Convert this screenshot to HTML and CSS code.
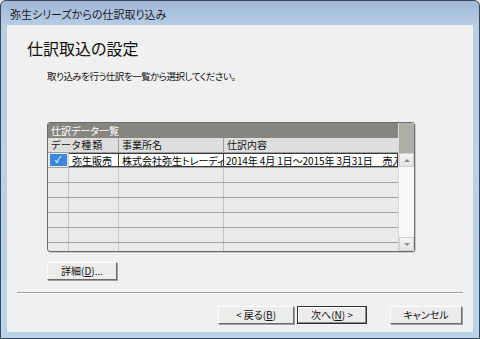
FILE: index.html
```html
<!DOCTYPE html>
<html lang="ja">
<head>
    <meta charset="UTF-8">
    <title>弥生シリーズからの仕訳取り込み</title>
    <link rel="stylesheet" href="styles.css">
</head>
<body>
    <div class="window">
        <div class="titlebar">弥生シリーズからの仕訳取り込み</div>
        <div class="client">
            <h1 class="heading">仕訳取込の設定</h1>
            <p class="lead">取り込みを行う仕訳を一覧から選択してください。</p>

            <div class="panel">
                <div class="list">
                    <div class="caption">仕訳データ一覧</div>
                    <div class="row head">
                        <div class="cell c-kind">データ種類</div>
                        <div class="cell c-office">事業所名</div>
                        <div class="cell c-detail">仕訳内容</div>
                    </div>
                    <div class="row data">
                        <div class="cell c-check"><span class="checkbox">&#10003;</span></div>
                        <div class="cell c-type">弥生販売</div>
                        <div class="cell c-office">株式会社弥生トレーディ</div>
                        <div class="cell c-detail">2014年 4月 1日～2015年 3月31日　売入</div>
                    </div>
                    <div class="row empty"><div class="cell c-check"></div><div class="cell c-type"></div><div class="cell c-office"></div><div class="cell c-detail"></div></div>
                    <div class="row empty"><div class="cell c-check"></div><div class="cell c-type"></div><div class="cell c-office"></div><div class="cell c-detail"></div></div>
                    <div class="row empty"><div class="cell c-check"></div><div class="cell c-type"></div><div class="cell c-office"></div><div class="cell c-detail"></div></div>
                    <div class="row empty"><div class="cell c-check"></div><div class="cell c-type"></div><div class="cell c-office"></div><div class="cell c-detail"></div></div>
                    <div class="row empty"><div class="cell c-check"></div><div class="cell c-type"></div><div class="cell c-office"></div><div class="cell c-detail"></div></div>
                    <div class="row empty"><div class="cell c-check"></div><div class="cell c-type"></div><div class="cell c-office"></div><div class="cell c-detail"></div></div>
                </div>
                <div class="scrollbar">
                    <div class="sb-top"></div>
                    <div class="sb-btn"><span class="arrow up"></span></div>
                    <div class="sb-track"></div>
                    <div class="sb-btn"><span class="arrow down"></span></div>
                </div>
            </div>

            <button class="btn btn-detail">詳細(<u>D</u>)...</button>

            <div class="separator"></div>

            <div class="actions">
                <button class="btn btn-back">&lt; 戻る(<u>B</u>)</button>
                <button class="btn btn-next">次へ(<u>N</u>) &gt;</button>
                <button class="btn btn-cancel">キャンセル</button>
            </div>
        </div>
    </div>
</body>
</html>
```

FILE: styles.css
```css
/* General */
html, body {
    margin: 0;
    padding: 0;
    background: #dfe7ef;
}

body {
    font-family: "Noto Sans CJK JP", "DejaVu Sans", sans-serif;
    font-size: 10px;
    color: #111;
    font-feature-settings: "palt";
}

/* Window frame */
.window {
    width: 480px;
    height: 339px;
    box-sizing: border-box;
    border: 1px solid #3b4858;
    border-radius: 6px 6px 0 0;
    background: linear-gradient(180deg, #9fb7d5 0, #b7cde6 24px, #bcd3ec 100%);
    padding: 0 6px 6px;
    display: flex;
    flex-direction: column;
}

.titlebar {
    height: 24px;
    line-height: 26px;
    padding-left: 3px;
    font-size: 11px;
    color: #1c1c1c;
}

.client {
    flex: 1;
    background: #f0f0f0;
    border-top: 1px solid #e4edf6;
    display: flex;
    flex-direction: column;
    align-items: flex-start;
}

/* Header texts */
.heading {
    margin: 12px 0 0 20px;
    font-size: 16px;
    line-height: 20px;
    font-weight: normal;
    color: #111;
}

.lead {
    margin: 11px 0 0 40px;
    font-size: 9.5px;
    letter-spacing: -0.5px;
    line-height: 14px;
}

/* List panel */
.panel {
    margin: 39px 0 0 40px;
    width: 368px;
    height: 130px;
    box-sizing: border-box;
    border: 1px solid #6d6d68;
    border-radius: 3px;
    display: flex;
    overflow: hidden;
    background: #eaeaea;
    box-shadow: 1px 1px 0 #c8c8c8;
}

.list {
    flex: 1;
    display: flex;
    flex-direction: column;
    overflow: hidden;
}

.caption {
    height: 15px;
    line-height: 15px;
    flex-shrink: 0;
    padding-left: 3px;
    background: #86857f;
    color: #fff;
}

.row {
    display: flex;
    height: 15px;
    flex-shrink: 0;
    box-sizing: border-box;
}

.cell {
    box-sizing: border-box;
    line-height: 14px;
    padding-left: 3px;
    white-space: nowrap;
    overflow: hidden;
    border-right: 1px solid #c4c4c4;
}

.c-check { width: 21px; padding: 0; }
.c-type { width: 50px; }
.c-kind { width: 71px; letter-spacing: 0.8px; }
.c-office { width: 105px; }
.c-detail { flex: 1; border-right: none; }

.row.head {
    background: #dedede;
    border-bottom: 1px solid #9d9d9d;
}

.row.head .cell {
    border-right-color: #9d9d9d;
}

.row.data {
    border-bottom: 1px solid #a4a4a4;
}

.row.data .cell {
    background: #fff;
    border: 1px solid #3a3a3a;
    border-left: none;
    color: #000;
}

.row.data .c-detail {
    padding-left: 2px;
    letter-spacing: -0.1px;
}

.row.data .c-check {
    background: #eaeaea;
    border: none;
    border-right: 1px solid #c4c4c4;
    display: flex;
    align-items: center;
    justify-content: center;
}

.checkbox {
    display: block;
    width: 17px;
    height: 12px;
    background: #3d86dc;
    color: #fff;
    font-size: 9px;
    line-height: 12px;
    text-align: center;
}

.row.empty {
    border-bottom: 1px solid #a4a4a4;
}

/* Scrollbar */
.scrollbar {
    width: 15px;
    display: flex;
    flex-direction: column;
    background: #f8f8f8;
    border-left: 1px solid #d8d8d8;
}

.sb-top {
    height: 30px;
    background: #aeada6;
}

.sb-btn {
    height: 14px;
    background: linear-gradient(#f4f4f4, #e4e4e4);
    border: 1px solid #d0d0d0;
    box-sizing: border-box;
    display: flex;
    align-items: center;
    justify-content: center;
}

.sb-track {
    flex: 1;
}

.arrow {
    width: 0;
    height: 0;
    border-left: 3px solid transparent;
    border-right: 3px solid transparent;
}

.arrow.up { border-bottom: 3px solid #8a8a8a; }
.arrow.down { border-top: 3px solid #8a8a8a; }

/* Buttons */
.btn {
    font-family: inherit;
    font-size: 10px;
    font-feature-settings: "palt";
    color: #111;
    height: 18px;
    padding: 0;
    line-height: 14px;
    background: #ececec;
    border: 1px solid;
    border-color: #fdfdfd #6b6b6b #6b6b6b #fdfdfd;
    box-shadow: 1px 1px 0 #a0a0a0;
    cursor: pointer;
}

.btn u {
    text-decoration: underline;
}

.btn-detail {
    margin: 10px 0 0 40px;
    width: 70px;
}

.separator {
    margin: 12px 0 0 10px;
    width: 446px;
    height: 1px;
    background: #a0a0a0;
    border-bottom: 1px solid #ffffff;
}

.actions {
    margin-top: 12px;
    align-self: stretch;
    display: flex;
    justify-content: flex-end;
    padding-right: 11px;
}

.btn-back { width: 76px; }

.btn-next {
    width: 70px;
    margin-left: 3px;
    border-color: #303030;
    box-shadow: inset -1px -1px 0 #8a8a8a, inset 1px 1px 0 #fff;
}

.btn-cancel {
    width: 72px;
    margin-left: 23px;
}
```
